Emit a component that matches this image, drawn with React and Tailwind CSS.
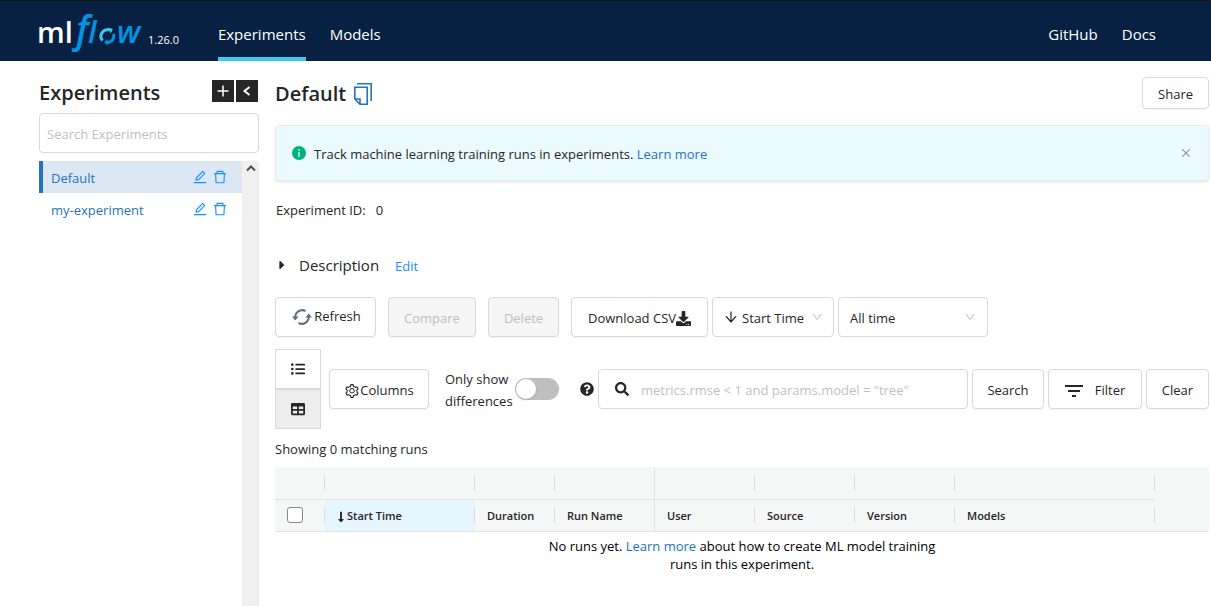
import {
  AiOutlineArrowDown, AiOutlineClose, AiOutlineDelete,
  AiOutlineDown, AiOutlineEdit, AiOutlineSetting,
} from "react-icons/ai";
import {
  FaCaretRight, FaDownload, FaLongArrowAltDown, FaListUl, FaQuestionCircle, FaSearch, FaTable,
} from "react-icons/fa";

const box = "rounded border border-[#d9d9d9] bg-white";
const button = "flex h-10 shrink-0 items-center justify-center rounded border border-[#d9d9d9] pt-[3px] shadow-xs";

function Logo() {
  return (
    <svg className="h-14 w-[108px] overflow-visible" viewBox="0 0 108 56" role="img" aria-label="mlflow">
      <g fontFamily="Open Sans, sans-serif" fontWeight="600">
        <text x="-1" y="40" fontSize="29" fill="#fff">ml</text>
        <g fill="#0194e2" fontStyle="italic">
          <text x="38" y="40" fontSize="37">f</text>
          <text x="50" y="40" fontSize="31">l</text>
          <text x="79" y="40" fontSize="31">w</text>
        </g>
      </g>
      <g fill="none" strokeWidth="3">
        <path d="M64.5 37.5a6.5 6.5 0 0 1 6.5-10.5" stroke="#43c9ed" />
        <path d="M70 24.5l5 1.5-2.500 4.500z" fill="#43c9ed" stroke="none" />
        <path d="M75.500 31a6.500 6.500 0 0 1-6.500 8.500" stroke="#0194e2" />
        <path d="M70 42l-4-2.500 3.500-3.500z" fill="#0194e2" stroke="none" />
      </g>
    </svg>
  );
}

function RefreshIcon() {
  return (
    <svg className="size-5" viewBox="0 0 20 20" fill="none" stroke="#5f7281" strokeWidth="2" aria-hidden="true">
      <path d="M3.3 11A7 7 0 0 1 13.5 4M16.700 9A7 7 0 0 1 6.500 16" />
      <path d="M0 9.500h6.600L3.300 13.500zM13.400 10.500h6.600L16.700 6.500z" fill="#5f7281" stroke="none" />
    </svg>
  );
}

function CopyIcon() {
  return (
    <svg className="h-6 w-5" viewBox="0 0 20 24" fill="none" stroke="currentColor" strokeWidth="1.6" aria-hidden="true">
      <path d="M4 1.8h14.2V19" />
      <path d="M1.8 5.3h12.4v16.9H7L1.8 17zM1.8 17H7v5.2" />
    </svg>
  );
}

function Experiment({ name, active }) {
  return (
    <li className={active ? "flex h-8 items-center border-l-4 border-[#2374bb] bg-[#dbe7f3] pr-[14px] pl-2" : "flex h-8 items-center border-l-4 border-transparent pr-[14px] pl-2"}>
      <a href="#experiment" className="flex-1 pt-[3px] text-[#2374bb]">{name}</a>
      <button aria-label={"Rename " + name} className="mr-1 text-[#1890ff]"><AiOutlineEdit size={16} /></button>
      <button aria-label={"Delete " + name} className="text-[#1890ff]"><AiOutlineDelete size={16} /></button>
    </li>
  );
}

function Sidebar() {
  return (
    <aside className="flex w-[220px] shrink-0 flex-col">
      <div className="flex h-[52px] items-center gap-0.5 pr-px">
        <h1 className="flex-1 pt-3 text-xl font-semibold">Experiments</h1>
        <button aria-label="New experiment" className="mt-2 flex size-[22px] items-center justify-center bg-[#262626] text-white">
          <svg className="size-3" viewBox="0 0 12 12" stroke="currentColor" strokeWidth="1.5"><path d="M6 0.5v11M0.5 6h11" /></svg>
        </button>
        <button aria-label="Collapse" className="mt-2 flex size-[22px] items-center justify-center bg-[#262626] text-white">
          <svg className="size-3" viewBox="0 0 12 12" fill="none" stroke="currentColor" strokeWidth="2"><path d="M8.5 2L3.5 6l5 4" /></svg>
        </button>
      </div>
      <input aria-label="Search Experiments" placeholder="Search Experiments" className={box + " h-10 w-full px-[7px] pt-0.5 placeholder:text-[#bfbfbf]"} />
      <div className="mt-2 flex flex-1">
        <ul className="flex-1">
          <Experiment name="Default" active />
          <Experiment name="my-experiment" />
        </ul>
        <div className="flex w-[17px] justify-center bg-[#f0f0f0] pt-0.5">
          <svg className="size-3" viewBox="0 0 12 12" fill="none" stroke="#505050" strokeWidth="2"><path d="M2 7.5l4-4 4 4" /></svg>
        </div>
      </div>
    </aside>
  );
}

const columns = [
  { label: "Start Time", sorted: true },
  { label: "Duration" },
  { label: "Run Name", full: true },
  { label: "User" },
  { label: "Source" },
  { label: "Version" },
  { label: "Models" },
];

function Cell({ children, full }) {
  return (
    <div className="flex h-full items-center">
      <div className="flex-1 pl-3">{children}</div>
      <div className={full ? "h-full w-px bg-[#e2e4e4]" : "h-4 w-px bg-[#d9dcde]"} />
    </div>
  );
}

function RunsTable() {
  return (
    <table className="mt-2 w-full table-fixed bg-[#f5f7f7] text-left text-[11px]">
      <colgroup>
        <col className="w-[50px]" /><col className="w-[150px]" /><col className="w-20" /><col className="w-[100px]" />
        <col className="w-[100px]" /><col className="w-[100px]" /><col className="w-[100px]" /><col className="w-[200px]" /><col />
      </colgroup>
      <thead>
        <tr className="h-8">
          <td className="h-8 border-b border-[#e2e4e4] p-0"><Cell /></td>
          {columns.map((c) => <td key={c.label} className="h-8 border-b border-[#e2e4e4] p-0"><Cell full={c.full} /></td>)}
          <td />
        </tr>
        <tr className="h-8 border-b border-[#e2e4e4]">
          <th className="h-8 p-0"><Cell><input type="checkbox" aria-label="Select all runs" className="block size-4 appearance-none rounded-[3px] border border-[#7f8c8d] bg-white" /></Cell></th>
          {columns.map((c) => (
            <th key={c.label} className={c.sorted ? "h-8 bg-[#e5f5fe] p-0 font-semibold" : "h-8 p-0 font-semibold"}>
              <Cell full={c.full}>
                <span className="flex items-center pt-[3px]">{c.sorted && <FaLongArrowAltDown size={12} className="-ml-0.5" />}{c.label}</span>
              </Cell>
            </th>
          ))}
          <td />
        </tr>
      </thead>
    </table>
  );
}

function Main() {
  return (
    <main className="min-w-0 flex-1">
      <div className="flex h-16 items-center justify-between">
        <h2 className="flex items-center gap-1 pt-0.5 text-xl font-semibold">
          Default
          <button aria-label="Copy name" className="ml-[3px] text-[#2374bb]"><CopyIcon /></button>
        </h2>
        <button className="h-8 rounded border border-[#d9d9d9] px-[15px] pt-[3px] shadow-xs">Share</button>
      </div>
      <div className="flex h-14 items-center rounded border border-[#e8eef0] bg-[#ebfafe] px-4 shadow-sm">
        <svg className="size-[14px]" viewBox="0 0 14 14"><circle cx="7" cy="7" r="7" fill="#00b379" /><path d="M7 3v2M7 6v5" stroke="#b8f0dc" strokeWidth="1.5" /></svg>
        <p className="ml-2 flex-1 pt-[3px]">Track machine learning training runs in experiments. <a href="#learn" className="text-[#2374bb]">Learn more</a></p>
        <button aria-label="Close" className="text-[#7f8c8d]"><AiOutlineClose size={12} /></button>
      </div>
      <p className="mt-[19px] pl-px leading-5">Experiment ID:&nbsp;&nbsp; 0</p>
      <div className="mt-[29px] flex h-8 items-center">
        <button className="flex items-center text-[15px]"><FaCaretRight size={14} className="mr-[10px]" />Description</button>
        <button className="ml-4 pt-[3px] text-[#1890ff]">Edit</button>
      </div>
      <div className="mt-4 flex items-center">
        <button className="flex h-10 w-[101px] shrink-0 items-center justify-center gap-0.5 rounded border border-[#d9d9d9] pl-0.5 shadow-xs"><RefreshIcon />Refresh</button>
        <button disabled className={button + " ml-3 w-[88px] bg-[#f5f5f5] text-[#bfbfbf]"}>Compare</button>
        <button disabled className={button + " ml-3 w-[71px] bg-[#f5f5f5] text-[#bfbfbf]"}>Delete</button>
        <button className={button + " ml-3 w-[137px]"}>Download CSV<FaDownload size={15} /></button>
        <div className={box + " ml-1 flex h-10 w-[122px] items-center px-[10px]"}>
          <AiOutlineArrowDown size={16} className="shrink-0" />
          <select aria-label="Sort by" className="min-w-0 flex-1 appearance-none pt-[3px] pl-[3px]"><option>Start Time</option></select>
          <AiOutlineDown size={12} className="shrink-0 text-[#bfbfbf]" />
        </div>
        <div className={box + " ml-1 flex h-10 w-[150px] items-center px-[11px]"}>
          <select aria-label="Time range" className="min-w-0 flex-1 appearance-none pt-[3px]"><option>All time</option></select>
          <AiOutlineDown size={12} className="shrink-0 text-[#bfbfbf]" />
        </div>
      </div>
      <div className="mt-3 flex items-center">
        <div className="flex w-[46px] shrink-0 flex-col">
          <button aria-label="List view" className="flex h-10 items-center justify-center border border-[#d9d9d9]"><FaListUl size={14} /></button>
          <button aria-label="Table view" className="flex h-10 items-center justify-center border border-[#d9d9d9] bg-[#ededed]"><FaTable size={14} /></button>
        </div>
        <button className={button + " ml-2 w-[100px]"}><AiOutlineSetting size={16} />Columns</button>
        <span id="diff" className="ml-4 w-[66px] shrink-0 pt-0.5 leading-[22px]">Only show differences</span>
        <button role="switch" aria-checked="false" aria-labelledby="diff" className="ml-1 h-[22px] w-11 shrink-0 rounded-full bg-[#bfbfbf] p-px">
          <span className="block size-5 rounded-full bg-white shadow" />
        </button>
        <button aria-label="Help" className="ml-[21px] shrink-0"><FaQuestionCircle size={14} /></button>
        <label className={box + " ml-1 flex h-10 min-w-0 flex-1 items-center pl-4"}>
          <FaSearch size={14} className="mr-3 shrink-0" />
          <input aria-label="Search runs" placeholder={'metrics.rmse < 1 and params.model = "tree"'} className="min-w-0 flex-1 pt-[3px] placeholder:text-[#bfbfbf]" />
        </label>
        <button className={button + " ml-1 w-[72px]"}>Search</button>
        <button className={button + " ml-1 w-[94px] gap-3"}>
          <svg className="h-3 w-[18px]" viewBox="0 0 18 12" fill="currentColor"><path d="M0 0h18v2H0zM3 5h12v2H3zM7 10h4v2H7z" /></svg>
          Filter
        </button>
        <button className={button + " ml-1 w-[63px]"}>Clear</button>
      </div>
      <p className="mt-[10px] leading-5">Showing 0 matching runs</p>
      <RunsTable />
      <p className="mx-auto mt-[5px] max-w-[400px] text-center leading-[18px] text-black">
        No runs yet. <a href="#learn" className="text-[#2374bb]">Learn more</a> about how to create ML model training runs in this experiment.
      </p>
    </main>
  );
}

export default function App() {
  return (
    <div className="flex min-h-screen flex-col bg-white font-['Open_Sans',sans-serif] text-[13px] text-[#262626]">
      <header className="flex h-[61px] items-stretch border-t border-[#111] bg-[#082142] pr-[55px] pl-[38px] text-[15px] text-white">
        <a href="#home" className="flex items-center"><Logo /><span className="ml-0.5 pt-[18px] text-[11px]">1.26.0</span></a>
        <nav className="ml-[39px] flex gap-6">
          <a href="#experiments" className="flex items-center border-b-4 border-[#43c9ed] pt-[10px]">Experiments</a>
          <a href="#models" className="flex items-center pt-[6px]">Models</a>
        </nav>
        <nav className="ml-auto flex gap-6">
          <a href="#github" className="flex items-center pt-[6px]">GitHub</a>
          <a href="#docs" className="flex items-center pt-[6px]">Docs</a>
        </nav>
      </header>
      <div className="flex flex-1 gap-4 pr-[2px] pl-[39px]">
        <Sidebar />
        <Main />
      </div>
    </div>
  );
}
